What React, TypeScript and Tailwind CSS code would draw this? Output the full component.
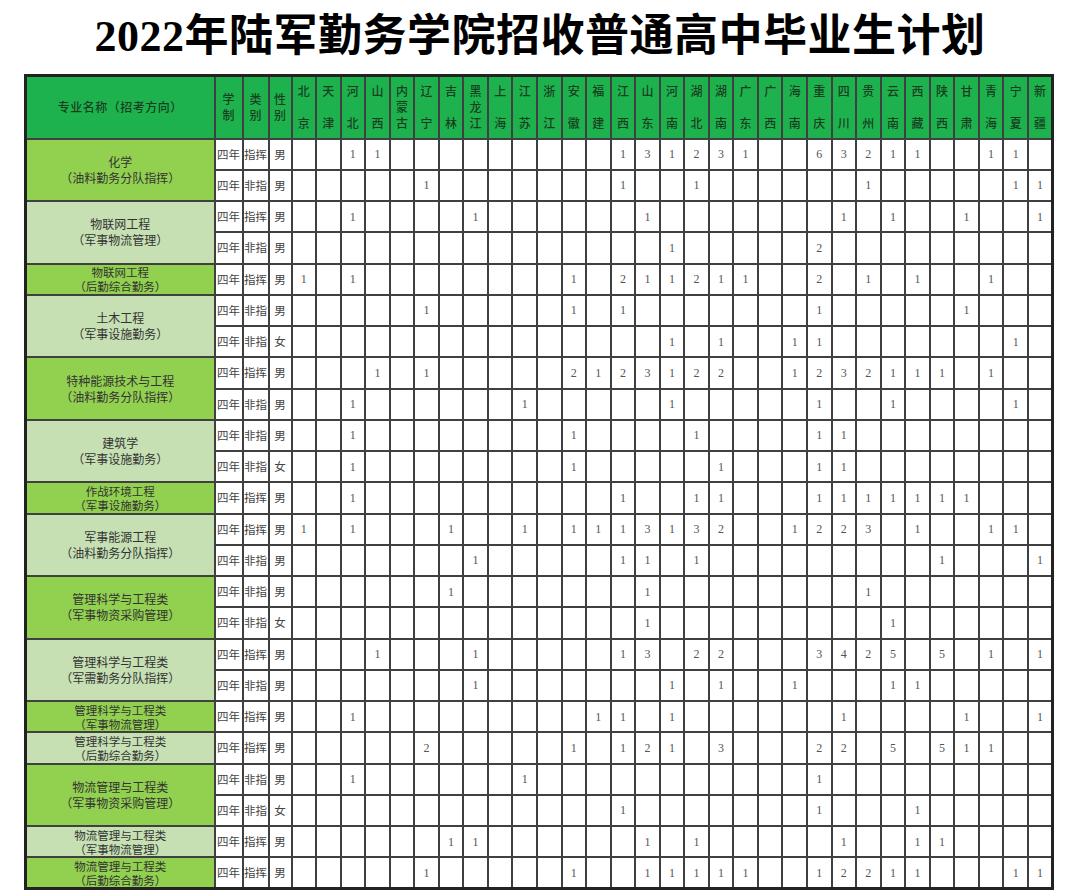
import React from 'react';

// 2022年陆军勤务学院招收普通高中毕业生计划

const provinces = [
  '北京', '天津', '河北', '山西', '内蒙古', '辽宁', '吉林', '黑龙江', '上海', '江苏', '浙江',
  '安徽', '福建', '江西', '山东', '河南', '湖北', '湖南', '广东', '广西', '海南', '重庆',
  '四川', '贵州', '云南', '西藏', '陕西', '甘肃', '青海', '宁夏', '新疆',
];

type PlanRow = { kind: '指挥' | '非指'; gender: '男' | '女'; counts: Record<string, number> };
type Major = { name: string; direction: string; rows: PlanRow[] };

const majors: Major[] = [
  {
    name: '化学',
    direction: '（油料勤务分队指挥）',
    rows: [
      { kind: '指挥', gender: '男', counts: { 河北: 1, 山西: 1, 江西: 1, 山东: 3, 河南: 1, 湖北: 2, 湖南: 3, 广东: 1, 重庆: 6, 四川: 3, 贵州: 2, 云南: 1, 西藏: 1, 青海: 1, 宁夏: 1 } },
      { kind: '非指', gender: '男', counts: { 辽宁: 1, 江西: 1, 湖北: 1, 贵州: 1, 宁夏: 1, 新疆: 1 } },
    ],
  },
  {
    name: '物联网工程',
    direction: '（军事物流管理）',
    rows: [
      { kind: '指挥', gender: '男', counts: { 河北: 1, 黑龙江: 1, 山东: 1, 四川: 1, 云南: 1, 甘肃: 1, 新疆: 1 } },
      { kind: '非指', gender: '男', counts: { 河南: 1, 重庆: 2 } },
    ],
  },
  {
    name: '物联网工程',
    direction: '（后勤综合勤务）',
    rows: [
      { kind: '指挥', gender: '男', counts: { 北京: 1, 河北: 1, 安徽: 1, 江西: 2, 山东: 1, 河南: 1, 湖北: 2, 湖南: 1, 广东: 1, 重庆: 2, 贵州: 1, 西藏: 1, 青海: 1 } },
    ],
  },
  {
    name: '土木工程',
    direction: '（军事设施勤务）',
    rows: [
      { kind: '非指', gender: '男', counts: { 辽宁: 1, 安徽: 1, 江西: 1, 重庆: 1, 甘肃: 1 } },
      { kind: '非指', gender: '女', counts: { 河南: 1, 湖南: 1, 海南: 1, 重庆: 1, 宁夏: 1 } },
    ],
  },
  {
    name: '特种能源技术与工程',
    direction: '（油料勤务分队指挥）',
    rows: [
      { kind: '指挥', gender: '男', counts: { 山西: 1, 辽宁: 1, 安徽: 2, 福建: 1, 江西: 2, 山东: 3, 河南: 1, 湖北: 2, 湖南: 2, 海南: 1, 重庆: 2, 四川: 3, 贵州: 2, 云南: 1, 西藏: 1, 陕西: 1, 青海: 1 } },
      { kind: '非指', gender: '男', counts: { 河北: 1, 江苏: 1, 河南: 1, 重庆: 1, 云南: 1, 宁夏: 1 } },
    ],
  },
  {
    name: '建筑学',
    direction: '（军事设施勤务）',
    rows: [
      { kind: '非指', gender: '男', counts: { 河北: 1, 安徽: 1, 湖北: 1, 重庆: 1, 四川: 1 } },
      { kind: '非指', gender: '女', counts: { 河北: 1, 安徽: 1, 湖南: 1, 重庆: 1, 四川: 1 } },
    ],
  },
  {
    name: '作战环境工程',
    direction: '（军事设施勤务）',
    rows: [
      { kind: '指挥', gender: '男', counts: { 河北: 1, 江西: 1, 湖北: 1, 湖南: 1, 重庆: 1, 四川: 1, 贵州: 1, 云南: 1, 西藏: 1, 陕西: 1, 甘肃: 1 } },
    ],
  },
  {
    name: '军事能源工程',
    direction: '（油料勤务分队指挥）',
    rows: [
      { kind: '指挥', gender: '男', counts: { 北京: 1, 河北: 1, 吉林: 1, 江苏: 1, 安徽: 1, 福建: 1, 江西: 1, 山东: 3, 河南: 1, 湖北: 3, 湖南: 2, 海南: 1, 重庆: 2, 四川: 2, 贵州: 3, 西藏: 1, 青海: 1, 宁夏: 1 } },
      { kind: '非指', gender: '男', counts: { 黑龙江: 1, 江西: 1, 山东: 1, 湖北: 1, 陕西: 1, 新疆: 1 } },
    ],
  },
  {
    name: '管理科学与工程类',
    direction: '（军事物资采购管理）',
    rows: [
      { kind: '非指', gender: '男', counts: { 吉林: 1, 山东: 1, 贵州: 1 } },
      { kind: '非指', gender: '女', counts: { 山东: 1, 云南: 1 } },
    ],
  },
  {
    name: '管理科学与工程类',
    direction: '（军需勤务分队指挥）',
    rows: [
      { kind: '指挥', gender: '男', counts: { 山西: 1, 黑龙江: 1, 江西: 1, 山东: 3, 湖北: 2, 湖南: 2, 重庆: 3, 四川: 4, 贵州: 2, 云南: 5, 陕西: 5, 青海: 1, 新疆: 1 } },
      { kind: '非指', gender: '男', counts: { 黑龙江: 1, 河南: 1, 湖南: 1, 海南: 1, 云南: 1, 西藏: 1 } },
    ],
  },
  {
    name: '管理科学与工程类',
    direction: '（军事物流管理）',
    rows: [
      { kind: '指挥', gender: '男', counts: { 河北: 1, 福建: 1, 江西: 1, 河南: 1, 四川: 1, 甘肃: 1, 新疆: 1 } },
    ],
  },
  {
    name: '管理科学与工程类',
    direction: '（后勤综合勤务）',
    rows: [
      { kind: '指挥', gender: '男', counts: { 辽宁: 2, 安徽: 1, 江西: 1, 山东: 2, 河南: 1, 湖南: 3, 重庆: 2, 四川: 2, 云南: 5, 陕西: 5, 甘肃: 1, 青海: 1 } },
    ],
  },
  {
    name: '物流管理与工程类',
    direction: '（军事物资采购管理）',
    rows: [
      { kind: '非指', gender: '男', counts: { 河北: 1, 江苏: 1, 重庆: 1 } },
      { kind: '非指', gender: '女', counts: { 江西: 1, 重庆: 1, 西藏: 1 } },
    ],
  },
  {
    name: '物流管理与工程类',
    direction: '（军事物流管理）',
    rows: [
      { kind: '指挥', gender: '男', counts: { 吉林: 1, 黑龙江: 1, 山东: 1, 湖北: 1, 四川: 1, 西藏: 1, 陕西: 1 } },
    ],
  },
  {
    name: '物流管理与工程类',
    direction: '（后勤综合勤务）',
    rows: [
      { kind: '指挥', gender: '男', counts: { 辽宁: 1, 安徽: 1, 山东: 1, 河南: 1, 湖北: 1, 湖南: 1, 广东: 1, 重庆: 1, 四川: 2, 贵州: 2, 云南: 1, 西藏: 1, 宁夏: 1, 新疆: 1 } },
    ],
  },
];

const cjk = { fontFamily: "'Noto Sans CJK SC', 'Noto Sans', sans-serif" };
const serifNum = { fontFamily: "'Liberation Serif', 'Noto Sans CJK SC', serif" };

const cell = 'border-2 border-[#404040] p-0 text-center align-middle';

const App: React.FC = () => {
  return (
    <div className="w-[1080px] h-[894px] bg-white overflow-hidden" style={cjk}>
      {/* Title */}
      <div className="h-[74px] flex items-center justify-center">
        <h1
          className="text-[44px] leading-none font-bold text-black tracking-[0.5px]"
          style={{ fontFamily: "'Liberation Serif', 'Noto Sans CJK SC', serif" }}
        >
          2022年陆军勤务学院招收普通高中毕业生计划
        </h1>
      </div>

      <div className="pl-[24px]">
        <table className="w-[1030px] table-fixed border-collapse border-[3px] border-[#222]">
          <colgroup>
            <col className="w-[189px]" />
            <col className="w-[28px]" />
            <col className="w-[26px]" />
            <col className="w-[23px]" />
            {provinces.map((p) => (
              <col key={p} />
            ))}
          </colgroup>
          <thead>
            <tr className="h-[63px] bg-[#1eb24e] text-[#173f1f] text-[12px] font-medium">
              <th className={`${cell} font-medium tracking-[0.5px]`}>专业名称（招考方向）</th>
              {['学制', '类别', '性别'].map((h) => (
                <th key={h} className={`${cell} font-medium`}>
                  <div className="flex flex-col items-center leading-[16px]">
                    {h.split('').map((c) => (
                      <span key={c}>{c}</span>
                    ))}
                  </div>
                </th>
              ))}
              {provinces.map((p) => (
                <th key={p} className={`${cell} font-medium`}>
                  <div className="h-[48px] flex flex-col items-center justify-between leading-[16px]">
                    {p.split('').map((c) => (
                      <span key={c}>{c}</span>
                    ))}
                  </div>
                </th>
              ))}
            </tr>
          </thead>
          <tbody>
            {majors.map((m, mi) =>
              m.rows.map((r, ri) => (
                <tr key={`${mi}-${ri}`} className="h-[31.25px]">
                  {ri === 0 && (
                    <td
                      rowSpan={m.rows.length}
                      className={`${cell} text-[#333] ${mi % 2 === 0 ? 'bg-[#92d050]' : 'bg-[#c6e0b4]'}`}
                    >
                      <div className={m.rows.length > 1 ? 'text-[12px] leading-[16px]' : 'text-[11.5px] leading-[14px]'}>
                        <div>{m.name}</div>
                        <div>{m.direction}</div>
                      </div>
                    </td>
                  )}
                  <td className={`${cell} text-[11.5px] text-[#444] whitespace-nowrap`}>四年</td>
                  <td className={`${cell} text-[11.5px] text-[#444] whitespace-nowrap`}>{r.kind}</td>
                  <td className={`${cell} text-[11.5px] text-[#444]`}>{r.gender}</td>
                  {provinces.map((p) => (
                    <td key={p} className={`${cell} text-[12px] text-[#555]`} style={serifNum}>
                      {r.counts[p] ?? ''}
                    </td>
                  ))}
                </tr>
              )),
            )}
          </tbody>
        </table>
      </div>
    </div>
  );
};

export default App;
